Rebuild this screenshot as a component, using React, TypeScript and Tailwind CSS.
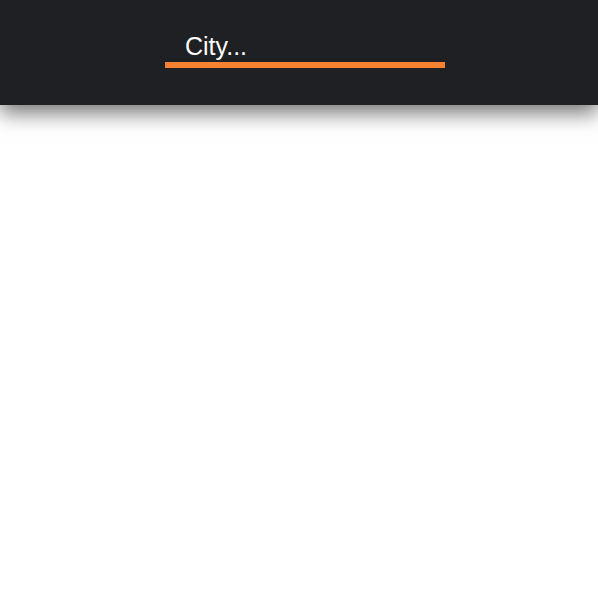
export default function App() {
  return (
    <div className="min-h-screen bg-white font-['Liberation_Sans',Arial,sans-serif]">
      <header className="h-[105px] bg-[#1f2023] pt-[28px] shadow-[0_8px_20px_rgba(0,0,0,0.55)]">
        <input
          type="text"
          placeholder="City..."
          className="ml-[165px] block h-[40px] w-[280px] border-b-[6px] border-[#f58231] bg-transparent pl-[20px] pt-[3px] text-[25px] text-white outline-none placeholder:text-white"
        />
      </header>
    </div>
  );
}
